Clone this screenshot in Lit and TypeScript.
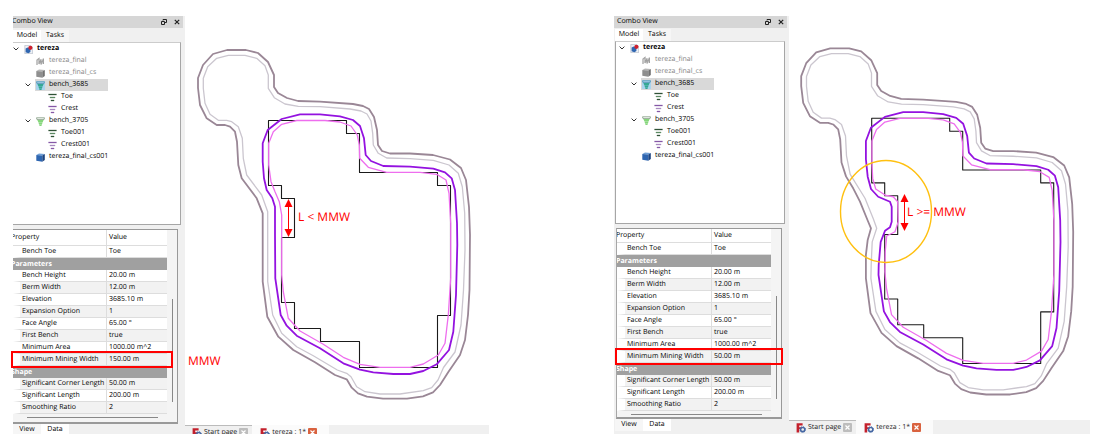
import { LitElement, html, svg, css } from "lit";
import { customElement, property } from "lit/decorators.js";
import { classMap } from "lit/directives/class-map.js";

type IconName = "doc" | "mesh" | "cubeGray" | "cubeBlue" | "bench" | "benchGreen" | "toe" | "crest";
interface Node { label: string; icon: IconName; level: number; open?: boolean; dim?: boolean; strong?: boolean; selected?: boolean; }
interface Prop { name: string; value?: string; mark?: boolean; shade?: boolean; }

const NODES: Node[] = [
  { label: "tereza", icon: "doc", level: 0, open: true, strong: true },
  { label: "tereza_final", icon: "mesh", level: 1, dim: true },
  { label: "tereza_final_cs", icon: "cubeGray", level: 1, dim: true },
  { label: "bench_3685", icon: "bench", level: 1, open: true, selected: true },
  { label: "Toe", icon: "toe", level: 2 },
  { label: "Crest", icon: "crest", level: 2 },
  { label: "bench_3705", icon: "benchGreen", level: 1, open: true },
  { label: "Toe001", icon: "toe", level: 2 },
  { label: "Crest001", icon: "crest", level: 2 },
  { label: "tereza_final_cs001", icon: "cubeBlue", level: 1 },
];

const properties = (width: string): Prop[] => [
  { name: "Bench Toe", value: "Toe" },
  { name: "Parameters" },
  { name: "Bench Height", value: "20.00 m" },
  { name: "Berm Width", value: "12.00 m", shade: true },
  { name: "Elevation", value: "3685.10 m" },
  { name: "Expansion Option", value: "1", shade: true },
  { name: "Face Angle", value: "65.00 °" },
  { name: "First Bench", value: "true", shade: true },
  { name: "Minimum Area", value: "1000.00 m^2" },
  { name: "Minimum Mining Width", value: width, mark: true, shade: true },
  { name: "Shape" },
  { name: "Significant Corner Length", value: "50.00 m", shade: true },
  { name: "Significant Length", value: "200.00 m" },
  { name: "Smoothing Ratio", value: "2", shade: true },
];

const cube = (top: string, front: string, side: string) => svg`
  <path d="M0.3 2 3 0.4 8.8 0.9 6.3 2.5Z" fill=${top}/><path d="M0.3 2 6.3 2.5V8.8L0.3 7.7Z" fill=${front}/><path d="M6.3 2.5 8.8 0.9V7.1L6.3 8.8Z" fill=${side}/>`;
const funnel = (rim: string, body: string) => svg`
  <path d="M0.5 0.8H8.5L8 2.6H1Z" fill="none" stroke=${rim} stroke-width="0.8"/>
  <path d="M1.4 3H7.6L6.8 5H2.2ZM2.3 5.3H6.7L6 7.3H3ZM3 7.6H6L5.4 8.9H3.6Z" fill=${body}/>`;
const bars = (a: string, b: string) => svg`
  <path d="M0.4 1.5H8.6" stroke=${a} stroke-width="1.3"/><path d="M1.8 4.5H7.2" stroke=${b} stroke-width="1.3"/><path d="M2.8 7.5H6.2" stroke=${a} stroke-width="1.3"/>`;

const ICONS: Record<IconName, unknown> = {
  doc: svg`<path d="M0.8 0.4H6.5L8.6 2.4V8.7H0.8Z" fill="#eef1f6" stroke="#a9b2c0" stroke-width="0.6"/>
    <path d="M1.6 3.6 3.6 2.4 6.4 3.2V7L4.4 8.2 1.6 7.2Z" fill="#2f66b0"/><circle cx="6.4" cy="2.8" r="2.1" fill="#cf1f2c"/>`,
  mesh: svg`<path d="M1 8V3L3 1.5V7L5 2.6V7.6L7.4 1.6V7" fill="none" stroke="#a0a0a0" stroke-width="1.2"/><path d="M1 3 5 2.6 7.4 4.4M1 6H7" stroke="#b8b8b8" stroke-width="0.6" fill="none"/>`,
  cubeGray: cube("#b5b5b5", "#8f8f8f", "#737373"),
  cubeBlue: cube("#6f9fd6", "#2e66b1", "#1d4581"),
  bench: funnel("#4f8fae", "#35a894"),
  benchGreen: funnel("#7c977c", "#86d67c"),
  toe: bars("#2f5236", "#5d8a63"),
  crest: bars("#8558a6", "#a98bc0"),
};

/* Outlines share one coordinate grid; the left flank varies with the mining width. */
const OUTER_TOP = "198,88 198,78 203,65 213,54 227,50 246,50 258,53 268,62 274,75 274,87 278,93 287,98 298,101 320,101.7 353,104 363,106 369,109 374,117 377,130 378,145 382,151 390,153.5 410,153.5 433,155 450,159.5 461,168 466,180 469,207 470,235 469.5,290 468,315 465,340 460,355 448.5,371.7 440,385 433,392.3 423,396.3 407,398.7 383,398.7 367,396.7 358,393.3 351.7,387.7 346.7,379.3 335,375 315,362.3 293.3,350 278.3,336.7 267.3,316.7 262.7,281.7";
const OUTER_END = "238.3,165 237,141.7 235,131.7 230,126.7 225,125 216.7,125 206.7,118.3 200,105";
const INNER_TOP = "203.3,88.3 203.3,78.3 207.7,66.7 216.7,58.3 228.3,55.3 245,55.3 256.7,58.3 265,65.7 268.3,75 268.3,88.3 274.3,97.7 285,104 298.3,106.3 320,106.7 350,109 361,111 367,114 371,121 372.7,133.3 373.3,145 378.3,153.3 386.7,158 410,158.7 433.3,160.3 449,165 458.3,173.3 462.3,186.7 464.7,213.3 465,250 463.5,290 461,325 455,352 443.5,367.5 438,380 431.7,387.7 423.3,390.7 400,394 380,394 365,391.7 356.7,386.7 351,376.7 346.7,373.3 337.3,370 313.3,355.7 296.7,346.7 281.7,333.3 272.7,315 267.7,281.7";
const INNER_END = "243.3,158.3 242.3,138.3 238.3,126.7 231.7,121.7 226.7,120.3 218.3,120.3 210,114.3 205,103.3";
const CREST_TOP = "262.7,143.3 267.7,130 281.7,119 300,114.3 320,114.3 340,116.3 353,120 360,126 364,138.3 365.7,155 371,161 383.3,166 410,166.7 433.3,168.7 445,172.3 451.7,178.3 455,190 457,223.3 457.3,245 456,295 453.3,331.7 449,350 436.7,364.3 423.3,371 410,374 393.3,374 373.3,372.3 360,369.7 343.3,363.3 320,348.3 296.7,335.7 286.7,325.7 280.7,315 275.3,278.3";
const TOE_TOP = "268.7,143.3 273.3,131.7 281.7,124.3 296.7,120.5 325,120.5 340,122 351,126 357.3,135 359.3,145 359.7,158.3 368.3,167.3 386.7,172.3 420,172.3 436.7,174.3 446,180 449,193.3 450.7,223.3 450.7,278 448.3,315 445,343.3 438.3,355 423.3,364 410,367.3 380,367.3 360,364.3 343.3,357.3 323.3,344.3 300,331 288.3,318.3 283.3,291.7 281.7,275";
const FLANK = {
  wide: {
    outer: "262.7,213.3 256.7,198.3 241.7,178.3", inner: "267.7,211.7 261.7,195 246.7,175",
    crest: "275,235 275,206.7 272.3,198.3 266.7,190 264,178.3 262.7,161.7",
    toe: "281.7,215 279.3,201.7 275,191.7 271,181.7 268.7,165",
  },
  narrow: {
    outer: "262.7,258 264.5,243 267.8,231.3 265,224.7 256.8,204.5 250,191 242.8,179", inner: "268,268 269,245 273.5,231.3 270,221.4 261.8,201 247,177",
    crest: "275.5,268 277.5,245 281.8,233.8 286.8,230.3 288.5,224.7 288.5,209.6 286.8,204.5 275,199.5 267.8,191.7 264.5,179.3 262.7,161.7",
    toe: "282,255 283.5,239 291.8,234.8 295,224.7 294.5,204.5 290,199.5 281.8,197.8 272.5,191.7 269.5,181 268.7,165",
  },
};
const PIT = "M268.5 120.5H346.5V133.5H359.5V172.5H437.5V185.5H450.5V315.5H437.5V367.5H359.5V341.5H320.5V328.5H294.5V302.5H281.5V237.5H294.5V198.5H281.5V185.5H268.5Z";

const contours = (kind: "wide" | "narrow") => svg`
  <path class="pit" d=${PIT}/>
  <polygon class="outer" points="${OUTER_TOP} ${FLANK[kind].outer} ${OUTER_END}"/>
  <polygon class="inner" points="${INNER_TOP} ${FLANK[kind].inner} ${INNER_END}"/>
  <polygon class="toe" points="${TOE_TOP} ${FLANK[kind].toe}"/>
  <polygon class="crest" points="${CREST_TOP} ${FLANK[kind].crest}"/>`;

const arrow = (x: number, a: number, b: number) => svg`
  <path class="shaft" d="M${x} ${a + 4}V${b - 4}"/>
  <path class="head" d="M${x} ${a}L${x + 4} ${a + 8}H${x - 4}ZM${x} ${b}L${x + 4} ${b - 8}H${x - 4}Z"/>`;

@customElement("combo-panel")
export class ComboPanel extends LitElement {
  @property() width = "";

  static styles = css`
    :host { display: flex; flex-direction: column; background: #f0f0f0; color: #000; font: var(--ui); }
    button { font: inherit; text-rendering: inherit; color: inherit; border: 0; margin: 0; padding: 0; background: none; display: flex; align-items: center; justify-content: center; }
    .title { display: flex; align-items: center; height: 12px; margin-right: 2px; background: #d6d6d6; overflow: hidden; }
    .title h2 { flex: 1; margin: 0 0 0 var(--title); font: inherit; white-space: nowrap; }
    .title button { width: 13px; height: 12px; }
    .tabs { display: flex; align-items: flex-end; height: var(--tabs); }
    .tabs button { height: 12px; width: 28px; background: #f6f6f6; }
    .tabs .on { background: #fff; }
    .top { padding-left: var(--edge); }
    .tree { box-sizing: border-box; height: 183px; margin: 0 4px 0 var(--edge); padding: 0; list-style: none; background: #fff; border: 1px solid #a6a6a6; border-left: var(--rule); border-top-color: #ccc; }
    .node { display: flex; align-items: center; height: 12px; white-space: nowrap; padding-left: var(--base); }
    .l1 { padding-left: calc(var(--base) + 12px); }
    .l2 { padding-left: calc(var(--base) + 24px); }
    .twist { width: 6px; height: 12px; margin-right: 4px; flex: none; }
    .item { display: flex; align-items: center; gap: 4px; height: 12px; padding-left: 1px; }
    .selected .item { background: #d9d9d9; padding-right: 20px; }
    .selected .item svg { background: #a9d4ee; }
    .dim { color: #858585; }
    .strong { font-weight: 700; color: #000; }
    .item svg { width: 9px; height: 9px; flex: none; }
    .frame { flex: 1; display: grid; grid-template-columns: auto 1fr; grid-template-rows: auto 1fr; margin: 4px 7px 0 var(--frame); background: #f4f4f4; border: 1px solid #999; border-left: var(--rule); border-bottom-width: 2px; }
    table { width: 154px; table-layout: fixed; border-collapse: separate; border-spacing: 0; background: #fff; }
    th, td { box-sizing: border-box; height: 12px; padding: 0 0 0 2px; line-height: 11px; text-align: left; font-weight: 400; white-space: nowrap; overflow: hidden; border-bottom: 1px solid #ddd; }
    thead th { height: var(--head); }
    tr > :first-child { width: var(--name); text-indent: -2px; padding-left: var(--clip); border-right: 1px solid #ddd; }
    tbody td:first-child { text-indent: 0; border-left: var(--indent) solid #fff; padding-left: 2px; }
    .shade td { background: #f2f2f2; background-clip: padding-box; }
    tbody .group { background: #a0a0a0; color: #fff; font-weight: 700; border: 0; }
    .mark { position: relative; }
    .mark td:first-child::after { content: ""; position: absolute; inset: -3px var(--over) -2px -2px; border: 2px solid #f00; }
    .vbar { width: 1px; height: 103px; background: #888; align-self: end; justify-self: center; margin-bottom: 12px; }
    .hbar { grid-column: 1 / -1; height: 1px; width: 131px; margin: 3px 0 2px 14px; background: #888; }
    .bottom { align-items: flex-start; height: var(--foot); overflow: hidden; padding-left: var(--edge); }
    .bottom button { height: 12px; }
  `;

  render() {
    return html`
      <header class="title">
        <h2>Combo View</h2>
        <button aria-label="Float"><svg width="6" height="6" viewBox="0 0 6 6" fill="none" stroke="#222"><path d="M2 1.5V.5H5.5V3.5H4M.5 2.5H3.5V5.5H.5Z"/></svg></button>
        <button aria-label="Close"><svg width="6" height="6" viewBox="0 0 6 6" stroke="#222" stroke-width="1.2"><path d="M.8 .8 5.2 5.2M5.2 .8 .8 5.2"/></svg></button>
      </header>
      <nav class="tabs top"><button class="on">Model</button><button>Tasks</button></nav>
      <ul class="tree">
        ${NODES.map((n) => html`
          <li class=${classMap({ node: true, [`l${n.level}`]: true, selected: !!n.selected })}>
            ${n.open
              ? html`<button class="twist" aria-label="Collapse ${n.label}"><svg width="6" height="4" viewBox="0 0 6 4" fill="none" stroke="#333"><path d="M.6 .6 3 3 5.4 .6"/></svg></button>`
              : html`<span class="twist"></span>`}
            <span class=${classMap({ item: true, dim: !!n.dim, strong: !!n.strong })}>
              <svg viewBox="0 0 9 9" aria-hidden="true">${ICONS[n.icon]}</svg>${n.label}</span>
          </li>`)}
      </ul>
      <section class="frame">
        <table>
          <thead><tr><th>Property</th><th>Value</th></tr></thead>
          <tbody>
            ${properties(this.width).map((p) => p.value === undefined
              ? html`<tr><th class="group" colspan="2">${p.name}</th></tr>`
              : html`<tr class=${classMap({ mark: !!p.mark, shade: !!p.shade })}><td>${p.name}</td><td>${p.value}</td></tr>`)}
          </tbody>
        </table>
        <div class="vbar"></div>
        <div class="hbar"></div>
      </section>
      <nav class="tabs bottom"><button>View</button><button class="on">Data</button></nav>`;
  }
}

@customElement("app-root")
export class AppRoot extends LitElement {
  static styles = css`
    :host { --ui: 7px/12px "Open Sans", sans-serif; text-rendering: geometricPrecision; display: grid; grid-template-columns: 1fr 1fr; gap: 125px; padding: 16px 15px 11px 13px; background: #fff; color: #222; }
    .view { display: grid; grid-template-columns: auto 1fr; align-items: stretch; min-width: 0; font: var(--ui); }
    combo-panel { --title: -1px; --tabs: 14px; --edge: 0px; --rule: 0; --base: 0px; --frame: 0px; --head: 16px; --name: 94px; --clip: 0px; --indent: 7px; --over: -6px; --foot: 10px; width: 172px; }
    .second combo-panel { --title: 3px; --tabs: 13px; --edge: 1px; --rule: 1px solid #a6a6a6; --base: 3px; --frame: 2px; --head: 14px; --name: 95px; --clip: 1px; --indent: 8px; --over: -12px; --foot: 15px; width: 175px; }
    .canvas { display: flex; flex-direction: column; min-width: 0; }
    .plot { display: block; width: 100%; flex: 1; }
    .pit, .outer, .inner, .crest, .toe, .ring { fill: none; stroke-linejoin: round; }
    .pit { stroke: #1a1a1a; stroke-width: 1.1; }
    .outer { stroke: #9a8796; stroke-width: 1.8; }
    .inner { stroke: #cbc6cf; stroke-width: 1.3; }
    .toe { stroke: #ee6eee; stroke-width: 1.3; }
    .crest { stroke: #9412e0; stroke-width: 1.8; }
    .ring { stroke: #ffc010; stroke-width: 1.4; }
    .shaft { stroke: #f00; stroke-width: 1; }
    .head, .note { fill: #f00; }
    .note { font: 12px "Open Sans", sans-serif; }
    .files { display: flex; height: 9px; overflow: hidden; background: #f0f0f0; align-items: flex-start; }
    .second .files { height: 14px; }
    .file { display: flex; align-items: center; gap: 2px; height: 14px; padding: 0 4px 0 7px; box-sizing: border-box; border: 0; border-top: 1px solid #bbb; background: #f0f0f0; font: inherit; text-rendering: inherit; color: inherit; white-space: nowrap; }
    .file.on { background: #fbfbfb; border-top-color: #fbfbfb; padding: 0 12px 0 8px; }
  `;

  private files() {
    const tab = (label: string, on: boolean) => html`
      <button class=${classMap({ file: true, on })}>
        <svg width="10" height="10" viewBox="0 0 10 10" aria-hidden="true"><path d="M.6 .2H6.6V2.5H3.2V4.2H5.4V6.1H3.2V9.6H.6Z" fill="#c3202c"/><circle cx="6.7" cy="6.5" r="2.1" fill="none" stroke="#4668a3" stroke-width="1.5"/><circle cx="6.7" cy="6.5" r="2.8" fill="none" stroke="#4668a3" stroke-width="1" stroke-dasharray="1.1 1.1"/></svg>
        ${label}
        <svg width="9" height="9" viewBox="0 0 9 9" aria-hidden="true"><rect width="9" height="9" rx="1" fill=${on ? "#d9623f" : "#bdbdbd"}/><path d="M2.5 2.5 6.5 6.5M6.5 2.5 2.5 6.5" stroke="#fff" stroke-width="1.2"/></svg>
      </button>`;
    return html`<nav class="files">${tab("Start page", false)}${tab("tereza : 1*", true)}</nav>`;
  }

  render() {
    return html`
      <section class="view">
        <combo-panel width="150.00 m"></combo-panel>
        <div class="canvas">
          <svg class="plot" viewBox="185 16 304 409" preserveAspectRatio="xMinYMin meet">
            ${contours("wide")}
            ${arrow(288.5, 199, 237)}
            <text class="note" x="298" y="221">L &lt; MMW</text>
            <text class="note" x="188" y="365">MMW</text>
          </svg>
          ${this.files()}
        </div>
      </section>
      <section class="view second">
        <combo-panel width="50.00 m"></combo-panel>
        <div class="canvas">
          <svg class="plot" viewBox="789 16 301 404" preserveAspectRatio="xMinYMin meet">
            <g transform="translate(603.2 -1.3) scale(1 .9927)">${contours("narrow")}</g>
            <ellipse class="ring" cx="886" cy="211.5" rx="45.5" ry="51"/>
            ${arrow(904.5, 194, 231)}
            <text class="note" x="907" y="216">L &gt;= MMW</text>
          </svg>
          ${this.files()}
        </div>
      </section>`;
  }
}
